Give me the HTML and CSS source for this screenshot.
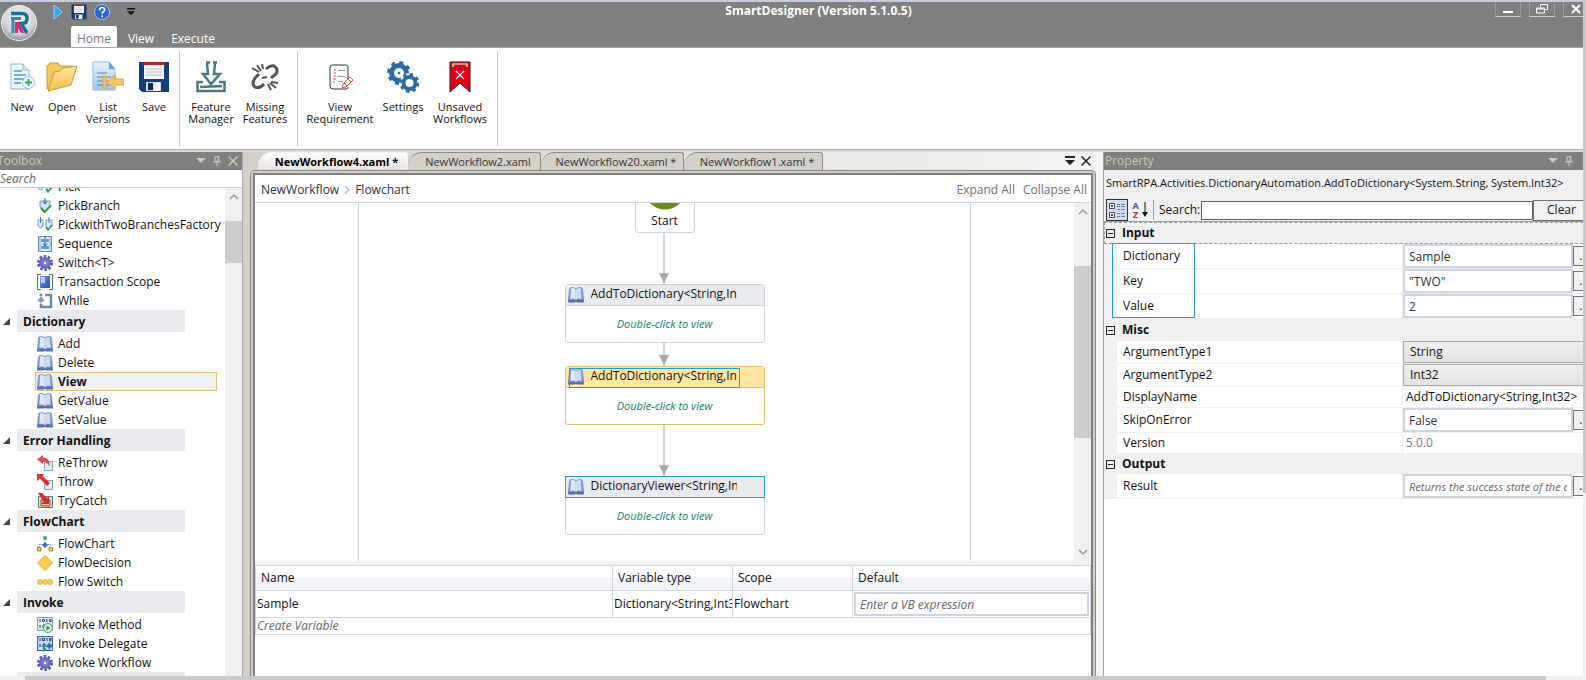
FILE: index.html
```html
<!DOCTYPE html>
<html lang="en">

<head>
    <meta charset="UTF-8">
    <meta name="viewport" content="width=device-width, initial-scale=1.0">
    <title>SmartDesigner (Version 5.1.0.5)</title>
    <link rel="stylesheet" href="styles.css">
</head>

<body>
    <!-- shared icons -->
    <svg class="defs" aria-hidden="true">
        <defs>
            <linearGradient id="gFolder" x1="0" y1="0" x2="0" y2="1">
                <stop offset="0" stop-color="#fde79a" />
                <stop offset="1" stop-color="#f3c04c" />
            </linearGradient>
            <linearGradient id="gBlue" x1="0" y1="0" x2="1" y2="1">
                <stop offset="0" stop-color="#6b9be8" />
                <stop offset="1" stop-color="#1f4fb4" />
            </linearGradient>
            <linearGradient id="gPage" x1="0" y1="0" x2="0" y2="1">
                <stop offset="0" stop-color="#eaf4fd" />
                <stop offset="1" stop-color="#9cc8ee" />
            </linearGradient>
            <linearGradient id="gBook" x1="0" y1="0" x2="0" y2="1">
                <stop offset="0" stop-color="#a9bce4" />
                <stop offset="1" stop-color="#4a69b0" />
            </linearGradient>
            <radialGradient id="gOrb" cx=".5" cy=".35" r=".65">
                <stop offset="0" stop-color="#f4f6f7" />
                <stop offset=".7" stop-color="#cfd3d6" />
                <stop offset="1" stop-color="#8d9194" />
            </radialGradient>
        </defs>
        <symbol id="i-floppy" viewBox="0 0 32 32">
            <path d="M1 1h30v30H4l-3-3z" fill="#123f7c" />
            <path d="M5 1h22v4H5z" fill="#b32430" />
            <path d="M6 4h20v14H6z" fill="#f6f6f6" />
            <path d="M8 8h16M8 11h16M8 14h16" stroke="#b9bcc2" />
            <path d="M8 21h15v9H8z" fill="#d5dbe3" />
            <path d="M10 22h5v7h-5z" fill="#0c2a55" />
            <path d="M18 22h4v8h-6z" fill="#fff" />
        </symbol>
        <symbol id="i-book" viewBox="0 0 16 16">
            <path d="M1 1L0 15.500h7l1-.800 1 .800h7L15 1z" fill="url(#gBook)" />
            <path d="M2.500 .800C5 .200 7 .800 8 2.200v11C6.500 11.800 4 11.800 1.800 12.800z" fill="#dfe8f9" stroke="#6580c0" stroke-width=".8" />
            <path d="M13.500 .800C11 .200 9 .800 8 2.200v11c1.500-1.400 4-1.400 6.200-.400z" fill="#cddaf3" stroke="#6580c0" stroke-width=".8" />
            <path d="M8 2v11" stroke="#fff" />
        </symbol>
        <symbol id="i-branch" viewBox="0 0 16 16">
            <path d="M3 3h10v6l-5 4-5-4z" fill="#cfe6fa" stroke="#6f9fd0" />
            <path d="M8 0v5M6 3.500L8 6l2-2.500" fill="none" stroke="#2f66c0" />
            <path d="M4 10l3.500 4L14 7.500" fill="none" stroke="#2f9e44" stroke-width="2" />
        </symbol>
        <symbol id="i-pick2" viewBox="0 0 16 16">
            <path d="M1 3h5v6l-2.500 2L1 9zM9 3h6v6l-3 3-3-3z" fill="#d7eafb" stroke="#6f9fd0" />
            <path d="M3.500 0v6M12 0v6" stroke="#3d74c8" />
            <path d="M9 10l2 3 4-5" fill="none" stroke="#2f9e44" stroke-width="1.500" />
        </symbol>
        <symbol id="i-seq" viewBox="0 0 16 16">
            <path d="M1.500.500h13v15h-13z" fill="#b9cde4" stroke="#6f90b4" />
            <path d="M4 1h8v14H4z" fill="#e6f0fa" />
            <path d="M4 3h8v3H4zM4 10h8v3H4z" fill="#5aa0e4" />
            <path d="M8 0v3M8 6v3M6 7.500L8 10l2-2.500" fill="none" stroke="#1c4f9c" />
        </symbol>
        <symbol id="i-gear" viewBox="0 0 16 16">
            <circle cx="8" cy="8" r="6.500" fill="none" stroke="#5454b0" stroke-width="3" stroke-dasharray="2.400 1.680" />
            <circle cx="8" cy="8" r="4.500" fill="#a3a6ec" stroke="#6a6ac8" stroke-width="3" />
            <circle cx="8" cy="8" r="2" fill="#eef" stroke="#3c3c90" stroke-width=".8" />
        </symbol>
        <symbol id="i-scope" viewBox="0 0 16 16">
            <path d="M4 .500H.500v15H4M12 .500h3.500v15H12" fill="none" stroke="#5b6b83" />
            <path d="M3 2h10v12H3z" fill="url(#gBlue)" />
            <path d="M4 3h4v6H4z" fill="#bcd3f8" />
        </symbol>
        <symbol id="i-while" viewBox="0 0 16 16">
            <path d="M4 11v3h10V2H8" fill="none" stroke="#7089ac" stroke-width="2.500" />
            <path d="M4 13V7M1 8l3-4 3 4z" fill="#8aa3c4" stroke="#7089ac" />
            <circle cx="4" cy="2" r="1.500" fill="#57a85a" />
        </symbol>
        <symbol id="i-throw" viewBox="0 0 16 16">
            <path d="M7.500 6.500h8v9h-8z" fill="#d7f0f2" stroke="#7ba5aa" />
            <path d="M0 0h7L5.500 2 13 9l-3 3-7-7.500L0 7z" fill="#d83038" />
        </symbol>
        <symbol id="i-rethrow" viewBox="0 0 16 16">
            <path d="M7.500 6.500h8v9h-8z" fill="#d7f0f2" stroke="#7ba5aa" />
            <path d="M0 4.500L6 0v2.500c5 0 7 3.500 6.500 9-1.500-3-3-4.500-6.500-4.500V9z" fill="#e0464c" />
        </symbol>
        <symbol id="i-try" viewBox="0 0 16 16">
            <path d="M1.500 3.500h14v11h-14z" fill="#d9e8dc" stroke="#5e7a68" />
            <path d="M4 7h9v6H4z" fill="#f6c8a0" stroke="#a33" />
            <path d="M1 0l4 0 5 5 2-2v8H4l2.500-2.500z" fill="#d02c34" />
        </symbol>
        <symbol id="i-flow" viewBox="0 0 16 16">
            <path d="M8 3v5M2 12V8.500h12V12" fill="none" stroke="#6b8fb8" stroke-dasharray="2 1" />
            <circle cx="8" cy="2" r="2" fill="#3cab6b" />
            <path d="M8 6l3 3-3 3-3-3z" fill="#4a70b8" />
            <path d="M.500 11.500h3.500v3.500H.500zM12 11.500h3.500v3.500H12z" fill="#f2d25c" stroke="#a8862a" />
        </symbol>
        <symbol id="i-diamond" viewBox="0 0 16 16">
            <path d="M8 .500L15.500 8 8 15.500.500 8z" fill="#f3cd55" stroke="#dcae3c" />
        </symbol>
        <symbol id="i-switch" viewBox="0 0 16 16">
            <g fill="#f6cf5c" stroke="#e4b54a">
                <circle cx="3" cy="8" r="2.500" />
                <circle cx="8" cy="8" r="2.500" />
                <circle cx="13" cy="8" r="2.500" />
            </g>
        </symbol>
        <symbol id="i-method" viewBox="0 0 16 16">
            <path d="M.500.500h15v13H.500z" fill="#dfeaf4" stroke="#7d99b5" />
            <path d="M3 2v3M10 2v3M3 8v3M6 8h2v3H6z" fill="none" stroke="#2b4d7c" />
            <path d="M5.500 2.500h2v2h-2zM12.500 2.500h1.500v2h-1.500z" fill="none" stroke="#2b4d7c" />
            <circle cx="11" cy="11" r="4.500" fill="#d9efe0" stroke="#5a9a76" />
            <path d="M9.500 8.500v5l4-2.500z" fill="#1f9a4c" />
        </symbol>
        <symbol id="i-delegate" viewBox="0 0 16 16">
            <path d="M.500.500h15v14H.500z" fill="#c3d8ee" stroke="#3a6496" />
            <path d="M3 2v3M10 2v3M3 8v3M6 8h2v3H6z" fill="none" stroke="#1b3d6c" />
            <path d="M5.500 2.500h2v2h-2zM12.500 2.500h1.500v2h-1.500z" fill="none" stroke="#1b3d6c" />
            <path d="M9 10l4-4v2.500h3v3h-3V14z" fill="#2c6fc4" />
            <path d="M6 11v5l4-2.500z" fill="#1f9a6c" />
        </symbol>
        <symbol id="i-down" viewBox="0 0 10 10">
            <path d="M0 2h10L5 7z" fill="currentColor" />
        </symbol>
        <symbol id="i-pin" viewBox="0 0 10 10">
            <path d="M3 .500h4v5H3zM1 6h8M5 6v4" fill="none" stroke="currentColor" />
            <path d="M6 .500v5" stroke="currentColor" />
        </symbol>
        <symbol id="i-close" viewBox="0 0 10 10">
            <path d="M.500.500l9 9M9.500.500l-9 9" fill="none" stroke="currentColor" stroke-width="1.500" />
        </symbol>
        <symbol id="i-up" viewBox="0 0 10 10">
            <path d="M1 7l4-4 4 4" fill="none" stroke="currentColor" stroke-width="1.500" />
        </symbol>
        <symbol id="i-menu" viewBox="0 0 10 10">
            <path d="M0 0h10v2H0zM0 4h10L5 9z" fill="currentColor" />
        </symbol>
    </svg>

    <div class="page">
        <div class="app">
            <header class="titlebar">
                <button class="orb" aria-label="Application menu">
                    <svg viewBox="0 0 36 36">
                        <circle cx="18" cy="18" r="17.500" fill="url(#gOrb)" stroke="#f4f4f4" />
                        <path d="M10 8.500h11q5 0 5 5T21 18.500h-1l6 9.500" fill="none" stroke="#1f6f94" stroke-width="3.500" />
                        <path d="M10 13.500h10" stroke="#2a8db0" stroke-width="3" />
                        <path d="M12 15v13" stroke="#2a8db0" stroke-width="3" />
                        <path d="M14 28V17h4l5 11h-3l-3-5v5z" fill="#e5246c" />
                    </svg>
                </button>
                <div class="title-main">
                    <div class="quick">
                        <button aria-label="Run"><svg class="q-run" viewBox="0 0 10 16"><path d="M1 1l8 7-8 7z" fill="#36a9f0" stroke="#8fd2fa" /></svg></button>
                        <button aria-label="Save"><svg viewBox="0 0 32 32"><use href="#i-floppy" /></svg></button>
                        <button aria-label="Help"><svg viewBox="0 0 16 16">
                            <circle cx="8" cy="8" r="7.500" fill="#2b62d0" stroke="#9dbdf2" />
                            <path d="M5.500 6.200q0-2.700 2.700-2.700 2.500 0 2.500 2.200 0 1.300-1.400 2.100-1.100.700-1.100 2M8.200 11.500v1.700" fill="none" stroke="#fff" stroke-width="1.700" />
                        </svg></button>
                        <button class="q-more" aria-label="Customize"><svg viewBox="0 0 10 10"><use href="#i-menu" /></svg></button>
                    </div>
                    <nav class="ribbon-tabs">
                        <button class="active">Home</button>
                        <button>View</button>
                        <button>Execute</button>
                    </nav>
                </div>
                <h1>SmartDesigner (Version 5.1.0.5)</h1>
                <div class="win-btns">
                    <button aria-label="Minimize"><svg viewBox="0 0 12 12"><path d="M1 9h10" stroke="#fff" stroke-width="2" /></svg></button>
                    <button aria-label="Restore"><svg viewBox="0 0 12 12"><path d="M4.500 4V1.500h7v5H9M.500 5h8v5h-8zM.500 6h8" fill="none" stroke="#fff" /></svg></button>
                    <button aria-label="Close"><svg viewBox="0 0 12 12"><path d="M2 2l8 8M10 2l-8 8" stroke="#fff" stroke-width="2" /></svg></button>
                </div>
            </header>

            <div class="ribbon">
                <div class="group">
                    <button class="w-s"><svg viewBox="0 0 32 32">
                        <path d="M5 3h12l6 6v19H5z" fill="#f3f9fe" stroke="#7fb9e4" />
                        <path d="M17 3v6h6" fill="#d3e9fa" stroke="#7fb9e4" />
                        <path d="M8 10h8M8 14h12M8 18h10M8 22h7" stroke="#6fb2e6" stroke-width="2" />
                        <circle cx="22.500" cy="21.500" r="6" fill="#f4faff" stroke="#8bbfe0" />
                        <path d="M22.500 18v7M19 21.500h7" stroke="#35a853" stroke-width="2" />
                    </svg>New</button>
                    <button class="w-s"><svg viewBox="0 0 32 32">
                        <path d="M1 28V5l3-3h8l2 3h12v6z" fill="#f2c95a" stroke="#c9993a" />
                        <path d="M2 30l6-19 6-1 3-3 14-2-6 19z" fill="url(#gFolder)" stroke="#c9993a" />
                    </svg>Open</button>
                    <button class="w-m"><svg viewBox="0 0 32 32">
                        <path d="M1 1h16l6 7v21H1z" fill="url(#gPage)" stroke="#8cb8e0" />
                        <path d="M17 1v7h6z" fill="#5f9edb" />
                        <path d="M5 12h10M5 16h14M5 20h10M5 24h12" stroke="#5a7fae" />
                        <path d="M11 15h3v12h-3zM15 21l8-7v4h9v6h-9v4z" fill="#f6c566" stroke="#e3a53c" />
                    </svg>List<br>Versions</button>
                    <button class="w-s"><svg viewBox="0 0 32 32"><use href="#i-floppy" /></svg>Save</button>
                </div>
                <div class="group">
                    <button class="w-l"><svg viewBox="0 0 32 32">
                        <path d="M12 2l1 11H8l8 10 9-10h-6l1-11M11 1.500h4M18 1.500h4" fill="none" stroke="#4d7880" stroke-width="2.500" />
                        <path d="M8 21H2.500v9h27v-9H24M5 26l22-1" fill="none" stroke="#4d7880" stroke-width="2.500" />
                    </svg>Feature<br>Manager</button>
                    <button class="w-l"><svg viewBox="0 0 32 32">
                        <path d="M17 8q4-4 8-3 5 3 2 8l-5 4M10 13l-4 4q-4 6 0 9 5 2 9-3" fill="none" stroke="#555" stroke-width="3" />
                        <path d="M13 17l5-1M3 7l7 4M8 4l4 6M13 3l1 5M27 27l-6-5M22 29l-3-6M29 22l-7-1" fill="none" stroke="#555" stroke-width="2" />
                    </svg>Missing<br>Features</button>
                </div>
                <div class="group">
                    <button class="w-xl"><svg viewBox="0 0 32 32">
                        <path d="M24 18V6q0-2-2-2H8Q6 4 6 7v18q0 3 3 3h13q2 0 2-2" fill="none" stroke="#333" />
                        <path d="M10 9h2M10 12h2M10 15h2M9 18h3M9 21h2" stroke="#e04848" />
                        <path d="M14 9.500h7M14 15.500h7M14 20.500h5" stroke="#999" />
                        <path d="M18 27l1-4 7-7 3 3-7 7zM20 22l3 3M24 18l3 3" fill="#fff" stroke="#e04848" />
                    </svg>View<br>Requirement</button>
                    <button class="w-n"><svg viewBox="0 0 32 32" fill="none" stroke="#2f6ba3">
                        <circle cx="12" cy="12" r="7.500" stroke-width="5" />
                        <circle cx="12" cy="12" r="10.500" stroke-width="3" stroke-dasharray="4 4.246" />
                        <circle cx="12" cy="12" r="1" fill="#2f6ba3" />
                        <circle cx="22.500" cy="22" r="9.500" fill="#fff" stroke="#fff" />
                        <circle cx="22.500" cy="22" r="6" stroke-width="4" />
                        <circle cx="22.500" cy="22" r="8.500" stroke-width="3" stroke-dasharray="3.300 3.375" />
                    </svg>Settings</button>
                    <button class="w-u"><svg viewBox="0 0 32 32">
                        <path d="M6 1h20v30l-10-9-10 9z" fill="#e5001a" stroke="#222" />
                        <path d="M9 6V3h14v3M12 10l8 8M20 10l-8 8" fill="none" stroke="#fff" stroke-width="1.200" />
                    </svg>Unsaved<br>Workflows</button>
                </div>
            </div>

            <main class="workspace">
                <aside class="toolbox">
                    <div class="panel-head">
                        <h2>Toolbox</h2>
                        <svg viewBox="0 0 10 10"><use href="#i-down" /></svg>
                        <svg viewBox="0 0 10 10"><use href="#i-pin" /></svg>
                        <svg viewBox="0 0 10 10"><use href="#i-close" /></svg>
                    </div>
                    <input class="tool-search" type="text" placeholder="Search" aria-label="Search toolbox">
                    <div class="tool-body">
                        <div class="tool-list">
                            <ul class="scrolled">
                                <li><svg><use href="#i-pick2" /></svg>Pick</li>
                                <li><svg><use href="#i-branch" /></svg>PickBranch</li>
                                <li><svg><use href="#i-pick2" /></svg>PickwithTwoBranchesFactory</li>
                                <li><svg><use href="#i-seq" /></svg>Sequence</li>
                                <li><svg><use href="#i-gear" /></svg>Switch&lt;T&gt;</li>
                                <li><svg><use href="#i-scope" /></svg>Transaction Scope</li>
                                <li><svg><use href="#i-while" /></svg>While</li>
                            </ul>
                            <h3>Dictionary</h3>
                            <ul>
                                <li><svg><use href="#i-book" /></svg>Add</li>
                                <li><svg><use href="#i-book" /></svg>Delete</li>
                                <li class="active"><svg><use href="#i-book" /></svg>View</li>
                                <li><svg><use href="#i-book" /></svg>GetValue</li>
                                <li><svg><use href="#i-book" /></svg>SetValue</li>
                            </ul>
                            <h3>Error Handling</h3>
                            <ul>
                                <li><svg><use href="#i-rethrow" /></svg>ReThrow</li>
                                <li><svg><use href="#i-throw" /></svg>Throw</li>
                                <li><svg><use href="#i-try" /></svg>TryCatch</li>
                            </ul>
                            <h3>FlowChart</h3>
                            <ul>
                                <li><svg><use href="#i-flow" /></svg>FlowChart</li>
                                <li><svg><use href="#i-diamond" /></svg>FlowDecision</li>
                                <li><svg><use href="#i-switch" /></svg>Flow Switch</li>
                            </ul>
                            <h3>Invoke</h3>
                            <ul>
                                <li><svg><use href="#i-method" /></svg>Invoke Method</li>
                                <li><svg><use href="#i-delegate" /></svg>Invoke Delegate</li>
                                <li><svg><use href="#i-gear" /></svg>Invoke Workflow</li>
                            </ul>
                            <h3></h3>
                        </div>
                        <div class="scrollbar">
                            <svg viewBox="0 0 10 10"><use href="#i-up" /></svg>
                            <div class="thumb thumb-tool"></div>
                        </div>
                    </div>
                </aside>

                <section class="document">
                    <div class="doc-tabs">
                        <button class="active">NewWorkflow4.xaml *</button>
                        <button class="tab-a">NewWorkflow2.xaml</button>
                        <button class="tab-c">NewWorkflow20.xaml *</button>
                        <button class="tab-b">NewWorkflow1.xaml *</button>
                        <div class="doc-tools">
                            <svg viewBox="0 0 10 10"><use href="#i-menu" /></svg>
                            <svg viewBox="0 0 10 10"><use href="#i-close" /></svg>
                        </div>
                    </div>
                    <div class="frame">
                        <div class="frame-in">
                            <div class="crumbs">
                                <a href="#">NewWorkflow</a>
                                <svg viewBox="0 0 6 8"><path d="M1 0l4 4-4 4" fill="none" stroke="#b8c0cc" stroke-width="1.500" /></svg>
                                <a href="#">Flowchart</a>
                                <div class="crumb-acts">
                                    <a href="#">Expand All</a>
                                    <a href="#">Collapse All</a>
                                </div>
                            </div>
                            <div class="designer">
                                <div class="canvas">
                                    <div class="sheet">
                                        <div class="start">Start</div>
                                        <div class="link link-long"></div>
                                        <div class="node">
                                            <div class="node-head"><svg><use href="#i-book" /></svg><span>AddToDictionary&lt;String,Int32&gt;</span></div>
                                            <p>Double-click to view</p>
                                        </div>
                                        <div class="link link-short"></div>
                                        <div class="node selected">
                                            <div class="node-head"><svg><use href="#i-book" /></svg><span>AddToDictionary&lt;String,Int32&gt;</span></div>
                                            <p>Double-click to view</p>
                                        </div>
                                        <div class="link link-long"></div>
                                        <div class="node focused">
                                            <div class="node-head"><svg><use href="#i-book" /></svg><span>DictionaryViewer&lt;String,Int32&gt;</span></div>
                                            <p>Double-click to view</p>
                                        </div>
                                    </div>
                                </div>
                                <div class="scrollbar">
                                    <svg viewBox="0 0 10 10"><use href="#i-up" /></svg>
                                    <div class="thumb thumb-doc"></div>
                                    <svg class="flip" viewBox="0 0 10 10"><use href="#i-up" /></svg>
                                </div>
                            </div>
                            <table class="vars">
                                <colgroup>
                                    <col>
                                    <col class="c-type">
                                    <col class="c-type">
                                    <col class="c-default">
                                </colgroup>
                                <thead>
                                    <tr>
                                        <th>Name</th>
                                        <th>Variable type</th>
                                        <th>Scope</th>
                                        <th>Default</th>
                                    </tr>
                                </thead>
                                <tbody>
                                    <tr>
                                        <td>Sample</td>
                                        <td>Dictionary&lt;String,Int32&gt;</td>
                                        <td>Flowchart</td>
                                        <td class="c-input"><input class="expr" type="text" placeholder="Enter a VB expression" aria-label="Default"></td>
                                    </tr>
                                    <tr class="create">
                                        <td colspan="4">Create Variable</td>
                                    </tr>
                                </tbody>
                            </table>
                        </div>
                    </div>
                </section>

                <aside class="property">
                    <div class="panel-head">
                        <h2>Property</h2>
                        <svg viewBox="0 0 10 10"><use href="#i-down" /></svg>
                        <svg viewBox="0 0 10 10"><use href="#i-pin" /></svg>
                    </div>
                    <div class="type-name">SmartRPA.Activities.DictionaryAutomation.AddToDictionary&lt;System.String, System.Int32&gt;</div>
                    <div class="prop-tools">
                        <button class="by-cat" aria-label="Categorized"><svg viewBox="0 0 18 18">
                            <path d="M1.500 2.500h5v5h-5zM1.500 11.500h5v5h-5z" fill="#fff" stroke="#444" />
                            <path d="M3 5h2M4 4v2M3 14h2M4 13v2" stroke="#111" />
                            <path d="M9 3.500h3M13 3.500h4M9 5.500h3M13 5.500h4M9 8.500h3M13 8.500h4M9 12.500h3M13 12.500h4M9 15.500h3M13 15.500h4" stroke="#6a7fae" />
                        </svg></button>
                        <button class="by-az" aria-label="Alphabetical"><span><b>A</b><b>Z</b></span><svg viewBox="0 0 6 16"><path d="M3 0v12" stroke="#111" /><path d="M0 10h6l-3 5z" fill="#111" /></svg></button>
                        <label for="prop-search">Search:</label>
                        <input id="prop-search" type="text">
                        <button class="clear">Clear</button>
                    </div>
                    <div class="grid">
                        <h3 class="cat dotted"><i></i>Input</h3>
                        <div class="rows marked">
                            <div class="row"><label for="p1">Dictionary</label><div><input class="expr" id="p1" type="text" value="Sample"><button>...</button></div></div>
                            <div class="row"><label for="p2">Key</label><div><input class="expr" id="p2" type="text" value="&quot;TWO&quot;"><button>...</button></div></div>
                            <div class="row"><label for="p3">Value</label><div><input class="expr" id="p3" type="text" value="2"><button>...</button></div></div>
                        </div>
                        <h3 class="cat"><i></i>Misc</h3>
                        <div class="rows">
                            <div class="row mid"><label for="p4">ArgumentType1</label><div><select id="p4"><option>String</option></select></div></div>
                            <div class="row mid"><label for="p5">ArgumentType2</label><div><select id="p5"><option>Int32</option></select></div></div>
                            <div class="row low"><label for="p6">DisplayName</label><div><input class="plain" id="p6" type="text" value="AddToDictionary&lt;String,Int32&gt;"></div></div>
                            <div class="row"><label for="p7">SkipOnError</label><div><input class="expr" id="p7" type="text" value="False"><button>...</button></div></div>
                            <div class="row low"><label for="p8">Version</label><div><input class="plain dim" id="p8" type="text" value="5.0.0" readonly></div></div>
                        </div>
                        <h3 class="cat short"><i></i>Output</h3>
                        <div class="rows">
                            <div class="row"><label for="p9">Result</label><div><input class="expr hint" id="p9" type="text" placeholder="Returns the success state of the activity"><button>...</button></div></div>
                        </div>
                    </div>
                </aside>
            </main>
        </div>
        <div class="page-v"><div></div></div>
        <div class="page-h"><div></div></div>
    </div>
</body>

</html>
```

FILE: styles.css
```css
* {
    box-sizing: border-box;
    margin: 0;
    padding: 0;
    list-style: none;
}

body {
    background: #fff;
    color: #111;
    font: 12px/16px "Open Sans", "Noto Sans", sans-serif;
}

button,
input,
select {
    font: inherit;
    color: inherit;
    border: 0;
    background: none;
    border-radius: 0;
    outline: 0;
}

a {
    color: inherit;
    text-decoration: none;
}

svg {
    display: block;
    flex: none;
}

.defs {
    position: absolute;
    width: 0;
    height: 0;
}

/* page with its own scroll bars */
.page {
    display: grid;
    grid-template: minmax(0, 1fr) 4px / minmax(0, 1fr) 3px;
    height: 100vh;
}

.app {
    display: flex;
    flex-direction: column;
    min-height: 0;
    overflow: hidden;
}

.page-v,
.page-h {
    background: #f0f0f0;
}

.page-v div {
    height: 73%;
    background: #c8c8c8;
}

.page-h {
    grid-column: 1 / 3;
}

.page-h div {
    height: 100%;
    margin: 0 40px 0 25px;
    background: #cacaca;
}

/* title bar */
.titlebar {
    position: relative;
    display: flex;
    height: 48px;
    border-top: 2px solid #c4cde0;
    border-bottom: 1px solid #a0a8b8;
    background: #808080;
    color: #fff;
}

.orb {
    width: 36px;
    height: 36px;
    margin: 3px 0 0 1px;
}

.title-main {
    display: flex;
    flex-direction: column;
    justify-content: space-between;
}

.quick {
    display: flex;
    align-items: center;
    gap: 7px;
    padding: 1px 0 0 15px;
    height: 18px;
}

.quick svg {
    width: 16px;
    height: 16px;
}

.quick .q-run {
    width: 12px;
}

.quick .q-more {
    margin-left: 10px;
    color: #111;
}

.quick .q-more svg {
    width: 8px;
    height: 8px;
}

.ribbon-tabs {
    display: flex;
    gap: 5px;
    padding-left: 34px;
}

.ribbon-tabs button {
    height: 21px;
    padding: 4px 6px 0;
}

.ribbon-tabs .active {
    background: #fff;
    color: #777;
    border-radius: 2px 2px 0 0;
}

.titlebar h1 {
    position: absolute;
    left: 0;
    right: 0;
    top: 1px;
    padding-left: 54px;
    font-size: 12px;
    line-height: 16px;
    text-align: center;
    pointer-events: none;
}

.win-btns {
    display: flex;
    gap: 8px;
    height: 15px;
    margin-left: auto;
    margin-right: -6px;
}

.win-btns button {
    width: 26px;
    padding-left: 6px;
    border: 1px solid #9c9c9c;
    border-top: 0;
    border-bottom-color: #d0d0d0;
}

.win-btns svg {
    width: 12px;
    height: 12px;
}

/* ribbon */
.ribbon {
    display: flex;
    height: 102px;
    padding: 3px 0 3px 2px;
    border-bottom: 1px solid #a7afc0;
}

.group {
    display: flex;
    padding-right: 5px;
    margin-right: 4px;
    border-right: 1px solid #bcc4cc;
}

.group button {
    display: flex;
    flex-direction: column;
    align-items: center;
    padding-top: 10px;
    font-size: 11px;
    line-height: 12px;
}

.group svg {
    width: 32px;
    height: 32px;
    margin-bottom: 8px;
}

.w-s {
    width: 40px;
}

.w-n {
    width: 50px;
}

.w-m {
    width: 52px;
}

.w-l {
    width: 54px;
}

.w-u {
    width: 64px;
}

.w-xl {
    width: 76px;
}

.workspace {
    display: flex;
    flex: 1;
    min-height: 0;
    padding-top: 2px;
    background: #dcd9d4;
}

.panel-head {
    display: flex;
    align-items: center;
    gap: 6px;
    height: 18px;
    padding-right: 4px;
    background: #808080;
    color: #cfcab0;
}

.panel-head h2 {
    flex: 1;
    font-size: 12px;
    font-weight: normal;
}

.panel-head svg {
    width: 10px;
    height: 10px;
}

/* toolbox */
.toolbox {
    display: flex;
    flex-direction: column;
    width: 243px;
    background: #fff;
    border-right: 1px solid #a8a8b0;
}

.toolbox h2 {
    margin-left: -3px;
}

.tool-search {
    width: 100%;
    height: 18px;
    border-bottom: 1px solid #c4ccd8;
}

.tool-search::placeholder {
    font-style: italic;
    color: #666;
    opacity: 1;
}

.tool-body {
    display: flex;
    flex: 1;
    min-height: 0;
}

.tool-list {
    flex: 1;
    overflow: hidden;
}

.tool-list .scrolled {
    margin-top: -11px;
}

.tool-list ul {
    padding: 0 8px 0 35px;
}

.tool-list h3 + ul {
    padding-top: 2px;
}

.tool-list li {
    display: flex;
    align-items: center;
    gap: 5px;
    height: 19px;
    padding-left: 2px;
    white-space: nowrap;
}

.tool-list li svg {
    width: 16px;
    height: 16px;
}

.tool-list .active {
    padding-left: 1px;
    border: 1px solid #e0c27a;
    background: #f0f0f0;
    font-weight: bold;
}

.tool-list h3 {
    position: relative;
    height: 22px;
    margin: 0 40px 0 17px;
    padding-left: 6px;
    background: #e8eaed;
    font-size: 12px;
    line-height: 24px;
}

.tool-list h3:before {
    position: absolute;
    left: -14px;
    top: 8px;
    content: '';
    border-left: 7px solid transparent;
    border-bottom: 7px solid #444;
}

.scrollbar {
    display: flex;
    flex-direction: column;
    align-items: center;
    width: 17px;
    padding: 4px 0;
    background: #f0f0f0;
    color: #999;
}

.scrollbar svg {
    width: 10px;
    height: 10px;
}

.flip {
    margin-top: auto;
    transform: rotate(180deg);
}

.thumb {
    width: 100%;
    background: #cdcdcd;
}

.thumb-tool {
    height: 42px;
    margin-top: 19px;
}

.thumb-doc {
    height: 49%;
    margin-top: 49px;
}

/* document area */
.document {
    display: flex;
    flex-direction: column;
    flex: 1;
    min-width: 0;
    padding: 0 7px;
    background: linear-gradient(90deg, #d4d0c8, #f3f3f3);
}

.doc-tabs {
    display: flex;
    height: 18px;
    padding-left: 8px;
}

.doc-tabs button {
    padding-left: 8px;
    border: 1px solid #8c8a84;
    border-left: 0;
    border-bottom: 0;
    border-radius: 14px 3px 0 0;
    background: #d4d0c8;
    color: #333;
    font-size: 11px;
    line-height: 16px;
}

.doc-tabs .active {
    width: 150px;
    border-color: #f4f3f1;
    background: linear-gradient(#fff, #e6e3de);
    color: #000;
    font-weight: bold;
}

.doc-tabs .tab-a {
    width: 133px;
}

.doc-tabs .tab-b {
    width: 139px;
}

.doc-tabs .tab-c {
    width: 143px;
}

.doc-tools {
    display: flex;
    align-items: center;
    gap: 6px;
    margin-left: auto;
    padding-right: 5px;
    color: #222;
}

.doc-tools svg {
    width: 10px;
    height: 10px;
}

.frame {
    display: flex;
    flex: 1;
    min-height: 0;
    padding: 2px 2px 0;
    border: 1px solid #8c8a84;
    border-bottom: 0;
    border-radius: 5px 5px 0 0;
    background: #d0cec9;
}

.frame-in {
    display: flex;
    flex-direction: column;
    flex: 1;
    min-width: 0;
    border: 2px solid #808080;
    border-bottom: 0;
    background: #fff;
}

.crumbs {
    display: flex;
    align-items: center;
    gap: 5px;
    height: 28px;
    padding: 2px 4px 0 6px;
    border-bottom: 1px solid #cfd4de;
    color: #28323f;
}

.crumbs svg {
    width: 6px;
    height: 8px;
}

.crumb-acts {
    display: flex;
    gap: 8px;
    margin-left: auto;
    color: #707070;
}

.designer {
    display: flex;
    height: 358px;
}

.canvas {
    flex: 1;
    padding: 0 103px;
    overflow: hidden;
}

.sheet {
    display: flex;
    flex-direction: column;
    align-items: center;
    height: 100%;
    border: 1px solid #cfd4dc;
    border-width: 0 1px;
}

.start {
    width: 60px;
    height: 30px;
    padding-top: 10px;
    border: 1px solid #cfd4dc;
    border-top: 0;
    border-radius: 0 0 4px 4px;
    background: radial-gradient(circle at 50% -14px, #6f8c10 20px, #fff 21px);
    text-align: center;
}

.link {
    position: relative;
    width: 2px;
    margin-right: 2px;
    background: #d3d5de;
}

.link:after {
    position: absolute;
    left: -4px;
    bottom: 1px;
    content: '';
    border: 5px solid transparent;
    border-top: 10px solid #a9a9a9;
    border-bottom: 0;
}

.link-long {
    height: 51px;
}

.link-short {
    height: 23px;
}

.node {
    width: 200px;
    height: 59px;
    border: 1px solid #cfd4dc;
    border-radius: 3px;
}

.node-head {
    display: flex;
    gap: 7px;
    height: 21px;
    padding: 2px;
    border-bottom: 1px solid #cfd4dc;
    background: #e8eaed;
    line-height: 14px;
}

.node-head svg {
    width: 16px;
    height: 16px;
}

.node-head span {
    width: 146px;
    overflow: hidden;
    white-space: nowrap;
}

.node p {
    padding-top: 10px;
    color: #158070;
    font-style: italic;
    font-size: 11px;
    text-align: center;
}

.selected,
.selected .node-head {
    border-color: #e3c06a;
}

.selected .node-head {
    position: relative;
    background: #ffe7a2;
}

/* highlight over the title of the selected activity */
.selected .node-head:after {
    position: absolute;
    left: 3px;
    top: 1px;
    width: 169px;
    height: 18px;
    content: '';
    border: 1px solid #2a9db8;
}

.focused .node-head {
    margin: -1px -1px 0;
    height: 22px;
    border: 1px solid #2a9fc0;
}

/* variables */
.vars {
    width: 100%;
    margin-top: 4px;
    border-collapse: collapse;
    table-layout: fixed;
    box-shadow: 0 -4px #f0f0f0;
}

.c-type {
    width: 120px;
}

.c-default {
    width: 238px;
}

.vars th,
.vars td {
    height: 26px;
    padding: 0 1px;
    border: 1px solid #d2d6df;
    overflow: hidden;
    text-align: left;
    white-space: nowrap;
}

.vars th {
    height: 25px;
    padding: 0 5px;
    background: linear-gradient(#fff 45%, #f3f4f8 45%);
    font-weight: normal;
}

.vars .create td {
    height: 17px;
    color: #666;
    font-style: italic;
}

.vars .c-input {
    padding: 1px;
}

.expr {
    display: block;
    width: 100%;
    height: 24px;
    padding: 0 4px;
    border: 2px solid #d0d5e2;
    background: #fff;
    color: #28323f;
}

.expr::placeholder {
    color: #666;
    font-style: italic;
    opacity: 1;
}

/* property panel */
.property {
    width: 480px;
    border-left: 1px solid #a0a0a0;
    background: #fff;
    overflow: hidden;
}

.property .panel-head {
    padding-right: 9px;
    padding-left: 1px;
}

.type-name {
    height: 29px;
    padding: 5px 0 0 2px;
    background: #f0f0f0;
    font-size: 11px;
    white-space: nowrap;
}

.prop-tools {
    display: flex;
    align-items: center;
    height: 23px;
    padding-left: 2px;
    background: #f0f0f0;
    border-bottom: 1px solid #a0a0a0;
}

.by-cat {
    width: 22px;
    height: 22px;
    padding: 1px;
    border: 1px solid #333;
    background: #cfdef5;
}

.by-az {
    display: flex;
    align-items: center;
    gap: 3px;
    padding: 0 5px 0 4px;
    height: 20px;
    border-right: 1px solid #a0a0a0;
}

.by-az b {
    display: block;
    width: 7px;
    color: #3558a8;
    font-size: 9px;
    line-height: 9px;
}

.by-az b + b {
    color: #b03040;
}

.by-az svg {
    width: 6px;
    height: 16px;
}

.prop-tools label {
    margin: 0 1px 0 5px;
}

.prop-tools input {
    flex: 1;
    min-width: 0;
    height: 19px;
    border: 1px solid #606060;
    background: #fff;
}

.clear {
    width: 50px;
    height: 21px;
    padding-left: 6px;
    border: 1px solid #707070;
    border-right: 0;
    background: #f2f2f2;
}

.cat {
    display: flex;
    align-items: center;
    gap: 7px;
    height: 22px;
    padding-left: 2px;
    background: #f0f0f0;
    font-size: 12px;
}

.short {
    height: 20px;
}

.dotted {
    border: 1px dashed #999;
    border-right: 0;
    padding-left: 1px;
}

.cat i {
    display: flex;
    align-items: center;
    width: 9px;
    height: 9px;
    padding: 0 1px;
    border: 1px solid #222;
}

.cat i:before {
    content: '';
    width: 100%;
    border-top: 1px solid #222;
}

.rows {
    position: relative;
    border-left: 13px solid #f0f0f0;
}

/* highlight over the property names */
.marked:after {
    position: absolute;
    left: -5px;
    top: -1px;
    width: 81px;
    height: 73px;
    content: '';
    border: 1px solid #2a9fc0;
    pointer-events: none;
}

.row {
    display: flex;
    align-items: center;
    height: 25px;
    border-bottom: 1px solid #f0f0f0;
}

.row label {
    flex: 1;
    padding-left: 6px;
}

.row > div {
    display: flex;
    align-items: center;
    width: 181px;
    height: 100%;
    border-left: 1px solid #f0f0f0;
    overflow: hidden;
}

.row .expr {
    flex: none;
    width: 170px;
}

.row .hint {
    font-size: 11px;
}

.row button {
    flex: none;
    width: 22px;
    height: 20px;
    border: 1px solid #707070;
    background: #f2f2f2;
}

.mid {
    height: 23px;
}

.low {
    height: 21px;
}

.row select {
    appearance: none;
    flex: none;
    width: 200px;
    height: 22px;
    padding-left: 6px;
    border: 1px solid #a8a8a8;
    background: linear-gradient(#efefef, #e2e2e2);
}

.plain {
    width: 100%;
    padding-left: 3px;
}

.dim {
    color: #777;
}
```
